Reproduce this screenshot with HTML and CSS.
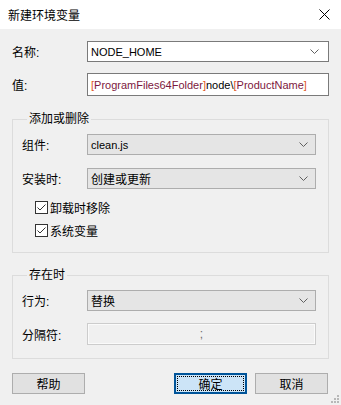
FILE: index.html
```html
<!DOCTYPE html>
<html lang="zh-CN">
<head>
    <meta charset="UTF-8">
    <meta name="viewport" content="width=device-width, initial-scale=1.0">
    <title>新建环境变量</title>
    <link rel="stylesheet" href="styles.css">
</head>
<body>
    <div class="dialog">
        <div class="titlebar">
            <span class="title">新建环境变量</span>
            <svg class="close" width="11" height="11" viewBox="0 0 11 11">
                <path d="M0.5 0.5 L10.5 10.5 M10.5 0.5 L0.5 10.5" stroke="#000" stroke-width="1" fill="none"/>
            </svg>
        </div>

        <div class="main">
            <div class="row">
                <span class="label">名称:</span>
                <div class="combo combo-edit">
                    <span class="latin">NODE_HOME</span>
                    <svg class="arrow" width="9" height="5" viewBox="0 0 9 5"><path d="M0.5 0.5 L4.5 4.5 L8.5 0.5" stroke="#606060" fill="none"/></svg>
                </div>
            </div>
            <div class="row row-value">
                <span class="label">值:</span>
                <div class="edit edit-value latin">
                    <span class="br">[</span><span class="prop">ProgramFiles64Folder</span><span class="br">]</span>node\<span class="br">[</span><span class="prop">ProductName</span><span class="br">]</span>
                </div>
            </div>

            <fieldset class="group group-add">
                <legend>添加或删除</legend>
                <div class="row">
                    <span class="label label-in">组件:</span>
                    <div class="combo">
                        <span class="latin">clean.js</span>
                        <svg class="arrow" width="9" height="5" viewBox="0 0 9 5"><path d="M0.5 0.5 L4.5 4.5 L8.5 0.5" stroke="#606060" fill="none"/></svg>
                    </div>
                </div>
                <div class="row row-gap">
                    <span class="label label-in">安装时:</span>
                    <div class="combo">
                        <span>创建或更新</span>
                        <svg class="arrow" width="9" height="5" viewBox="0 0 9 5"><path d="M0.5 0.5 L4.5 4.5 L8.5 0.5" stroke="#606060" fill="none"/></svg>
                    </div>
                </div>
                <div class="check check-first">
                    <span class="box">
                        <svg width="11" height="11" viewBox="0 0 11 11"><path d="M1.5 5.5 L4 8 L9.5 2.5" stroke="#333" stroke-width="1" fill="none"/></svg>
                    </span>
                    <span>卸载时移除</span>
                </div>
                <div class="check">
                    <span class="box">
                        <svg width="11" height="11" viewBox="0 0 11 11"><path d="M1.5 5.5 L4 8 L9.5 2.5" stroke="#333" stroke-width="1" fill="none"/></svg>
                    </span>
                    <span>系统变量</span>
                </div>
            </fieldset>

            <fieldset class="group group-exist">
                <legend>存在时</legend>
                <div class="row">
                    <span class="label label-in">行为:</span>
                    <div class="combo">
                        <span>替换</span>
                        <svg class="arrow" width="9" height="5" viewBox="0 0 9 5"><path d="M0.5 0.5 L4.5 4.5 L8.5 0.5" stroke="#606060" fill="none"/></svg>
                    </div>
                </div>
                <div class="row row-sep">
                    <span class="label label-in">分隔符:</span>
                    <div class="edit edit-disabled">;</div>
                </div>
            </fieldset>

            <div class="buttons">
                <button class="btn">帮助</button>
                <div class="spacer"></div>
                <button class="btn btn-default"><span class="focus">确定</span></button>
                <button class="btn">取消</button>
            </div>
        </div>

        <div class="grip">
            <svg width="8" height="8" viewBox="0 0 8 8" fill="#b8b8b8">
                <rect x="6" y="0" width="2" height="2"/>
                <rect x="3" y="3" width="2" height="2"/>
                <rect x="6" y="3" width="2" height="2"/>
                <rect x="0" y="6" width="2" height="2"/>
                <rect x="3" y="6" width="2" height="2"/>
                <rect x="6" y="6" width="2" height="2"/>
            </svg>
        </div>
    </div>
</body>
</html>
```

FILE: styles.css
```css
* {
    box-sizing: border-box;
}

body {
    margin: 0;
    font-family: "Liberation Sans", "Noto Sans CJK SC", sans-serif;
    font-size: 12px;
    color: #000;
    background-color: #f0f0f0;
}

.dialog {
    width: 341px;
    height: 405px;
    background-color: #f0f0f0;
    display: flex;
    flex-direction: column;
}

.titlebar {
    height: 29px;
    background-color: #fff;
    display: flex;
    align-items: center;
    justify-content: space-between;
    padding: 0 11px 0 8px;
    flex-shrink: 0;
}

.title {
    font-size: 12px;
}

.main {
    padding: 12px 12px 0 12px;
}

.row {
    display: flex;
    align-items: center;
}

.label {
    width: 75px;
    flex-shrink: 0;
}

.label-in {
    width: 65px;
}

.latin {
    font-size: 11px;
}

.row-value {
    margin-top: 11px;
}

.combo {
    width: 231px;
    height: 21px;
    border: 1px solid #adadad;
    background-color: #e5e5e5;
    display: flex;
    align-items: center;
    justify-content: space-between;
    padding: 0 7px 0 3px;
}

.combo-edit {
    width: 243px;
    background-color: #fff;
    border-color: #7a7a7a;
    padding-right: 9px;
}

.arrow {
    display: block;
}

.edit {
    height: 23px;
    border: 1px solid #7a7a7a;
    background-color: #fff;
    display: flex;
    align-items: center;
    padding: 0 3px;
    white-space: nowrap;
}

.edit-value {
    width: 243px;
}

.br {
    color: #e0561e;
}

.prop {
    color: #7d1840;
}

.edit-disabled {
    width: 231px;
    height: 22px;
    border-color: #cccccc;
    background-color: #f0f0f0;
    box-shadow: inset 0 0 0 1px #fafafa;
    justify-content: center;
    color: #6d6d6d;
}

.group {
    margin: 0;
    padding: 0 12px 0 9px;
    border: 1px solid #dcdcdc;
    min-width: 0;
}

.group legend {
    padding: 0 2px;
    margin-left: 5px;
    line-height: 14px;
}

.group-add {
    margin-top: 16px;
    height: 141px;
    padding-top: 8px;
}

.group-exist {
    margin-top: 15px;
    height: 91px;
    padding-top: 8px;
}

.row-gap {
    margin-top: 13px;
}

.row-sep {
    margin-top: 12px;
}

.check {
    display: flex;
    align-items: center;
    gap: 2px;
    margin-left: 13px;
    margin-top: 10px;
    height: 13px;
}

.check-first {
    margin-top: 12px;
}

.box {
    width: 13px;
    height: 13px;
    border: 1px solid #333;
    background-color: #fff;
    display: flex;
    align-items: center;
    justify-content: center;
}

.box svg {
    display: block;
}

.buttons {
    display: flex;
    gap: 8px;
    margin-top: 14px;
    padding-right: 1px;
}

.spacer {
    flex: 1;
}

.btn {
    width: 73px;
    height: 21px;
    font-family: inherit;
    font-size: 12px;
    color: #000;
    background-color: #e1e1e1;
    border: 1px solid #adadad;
    padding: 0;
    margin: 0;
}

.btn-default {
    background-color: #cce4f7;
    border: 1px solid #005499;
    box-shadow: inset 0 0 0 1px #005499;
    padding: 2px;
}

.focus {
    display: flex;
    align-items: center;
    justify-content: center;
    height: 100%;
    border: 1px dotted #000;
}

.grip {
    display: flex;
    justify-content: flex-end;
    padding-right: 2px;
    margin-top: auto;
    padding-bottom: 2px;
}

.grip svg {
    display: block;
}
```
